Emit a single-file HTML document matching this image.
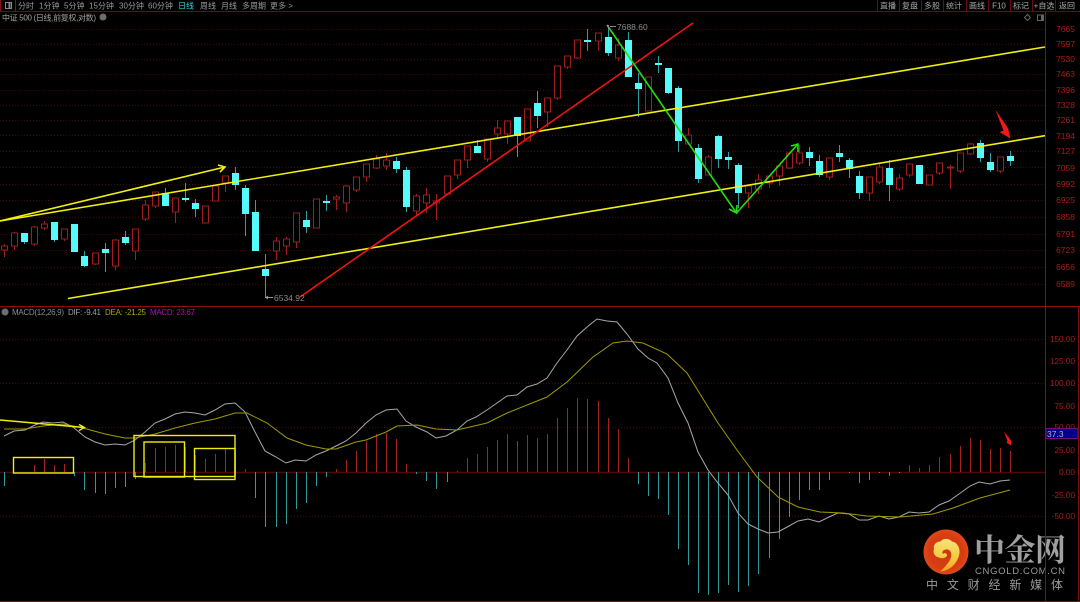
<!DOCTYPE html>
<html lang="zh"><head><meta charset="utf-8"><title>中证500 日线</title>
<style>
html,body{margin:0;padding:0;background:#000;width:1080px;height:602px;overflow:hidden}
svg{display:block;filter:blur(.3px)}
text{font-family:"Liberation Sans","Noto Sans CJK SC",sans-serif}
.tab{font-size:8px;fill:#9a9a9a}
.btn{font-size:8px;fill:#a8a8a8;text-anchor:middle}
.p{font-size:8.5px;fill:#a81c1c;text-anchor:end}
.m{font-size:8.2px;fill:#a81c1c;text-anchor:end}
</style></head><body>
<svg width="1080" height="602" viewBox="0 0 1080 602" xmlns="http://www.w3.org/2000/svg">
<defs>
<radialGradient id="lg" cx="50%" cy="50%" r="55%"><stop offset="0" stop-color="#c93a14"/><stop offset=".7" stop-color="#d93c12"/><stop offset="1" stop-color="#e0501a"/></radialGradient>
<linearGradient id="ly" x1="0" y1="0" x2="0" y2="1"><stop offset="0" stop-color="#f6e27a"/><stop offset=".6" stop-color="#f8c93c"/><stop offset="1" stop-color="#f0a020"/></linearGradient>
</defs>
<rect width="1080" height="602" fill="#000"/>

<!-- grid -->
<g stroke="#480808" stroke-width="1" stroke-dasharray="1 2" fill="none">
<path d="M0 29.500H1045M0 44.500H1045M0 59.500H1045M0 74.500H1045M0 90.500H1045M0 105.500H1045M0 120.500H1045M0 135.500H1045M0 151.500H1045M0 167.500H1045M0 184.500H1045M0 200.500H1045M0 217.500H1045M0 234.500H1045M0 250.500H1045M0 267.500H1045M0 284.500H1045"/>
<path d="M0 339.500H1045M0 383.500H1045M0 427.500H1045M0 516.500H1045"/>
</g>
<path d="M0 472.500H1045" stroke="#4e0808" stroke-width="1.500"/>

<!-- tabs -->
<text class="tab" x="18" y="8.500">分时</text>
<text class="tab" x="39" y="8.500">1分钟</text>
<text class="tab" x="64" y="8.500">5分钟</text>
<text class="tab" x="89" y="8.500">15分钟</text>
<text class="tab" x="119" y="8.500">30分钟</text>
<text class="tab" x="148" y="8.500">60分钟</text>
<text class="tab" x="178" y="8.500" style="fill:#35d0d0">日线</text>
<text class="tab" x="200" y="8.500">周线</text>
<text class="tab" x="221" y="8.500">月线</text>
<text class="tab" x="242" y="8.500">多周期</text>
<text class="tab" x="270" y="8.500">更多 &gt;</text>
<text class="btn" x="888" y="8.500">直播</text>
<text class="btn" x="910" y="8.500">复盘</text>
<text class="btn" x="932" y="8.500">多股</text>
<text class="btn" x="954" y="8.500">统计</text>
<text class="btn" x="977" y="8.500">画线</text>
<text class="btn" x="999" y="8.500">F10</text>
<text class="btn" x="1021" y="8.500">标记</text>
<text class="btn" x="1044" y="8.500">+自选</text>
<text class="btn" x="1067" y="8.500">返回</text>

<text x="2" y="20.500" font-size="8" fill="#a0a0a0" textLength="94">中证 500 (日线,前复权,对数)</text>
<circle cx="103" cy="17" r="3.500" fill="#6e6e6e"/>
<path d="M1027.500 14.500l3 3-3 3-3-3z" fill="none" stroke="#666"/>
<rect x="1037.500" y="15" width="6" height="5.500" fill="none" stroke="#666"/><rect x="1041" y="15" width="3" height="6" fill="#666"/>

<!-- price axis -->
<text class="p" x="1075" y="32">7665</text><text class="p" x="1075" y="47">7597</text><text class="p" x="1075" y="62">7530</text><text class="p" x="1075" y="77">7463</text><text class="p" x="1075" y="93">7396</text><text class="p" x="1075" y="108">7328</text><text class="p" x="1075" y="123">7261</text><text class="p" x="1075" y="139">7194</text><text class="p" x="1075" y="154">7127</text><text class="p" x="1075" y="171">7059</text><text class="p" x="1075" y="187">6992</text><text class="p" x="1075" y="203">6925</text><text class="p" x="1075" y="220">6858</text><text class="p" x="1075" y="237">6791</text><text class="p" x="1075" y="253">6723</text><text class="p" x="1075" y="270">6656</text><text class="p" x="1075" y="287">6589</text>

<!-- macd axis -->
<text class="m" x="1075" y="342">150.00</text><text class="m" x="1075" y="364">125.00</text><text class="m" x="1075" y="386">100.00</text><text class="m" x="1075" y="409">75.00</text><text class="m" x="1075" y="430">50.00</text><text class="m" x="1075" y="453">25.00</text><text class="m" x="1075" y="475">0.00</text><text class="m" x="1075" y="498">-25.00</text><text class="m" x="1075" y="519">-50.00</text>
<rect x="1046" y="428.500" width="32" height="10" fill="#00008c" stroke="#70107a" stroke-width="1"/>
<text x="1047" y="437" font-size="8.500" fill="#b0b0c0">37.3</text>

<!-- candles: red wicks -->
<path fill="none" stroke="#a01e1e" d="M4.500 244V257M14.500 232V250M34.500 226V246M44.500 221V230M64.500 229V241M95.500 253V265M115.500 239V270M135.500 229V260M145.500 200V221M155.500 192V208M175.500 198V223M225.500 176V192M276.500 237V260M286.500 237V255M296.500 213V248M336.500 195V210M346.500 185V212M356.500 177V192M366.500 164V182M376.500 155V169M386.500 153V170M416.500 194V215M426.500 188V213M436.500 194V220M457.500 160V179M467.500 146V168M487.500 139V162M497.500 120V137M507.500 121V144M547.500 98V127M557.500 66V100M567.500 56V69M577.500 40V59M598.500 33V51M618.500 38V61M688.500 128V144M708.500 155V175M748.500 186V208M758.500 174V194M769.500 176V188M779.500 166V186M789.500 153V169M799.500 145V165M829.500 158V180M869.500 177V201M879.500 163V184M899.500 174V191M909.500 164V177M939.500 163V175M950.500 165V189M960.500 153V173M970.500 143V155M1000.500 157V173"/>
<!-- candles: red bodies -->
<path fill="#000" stroke="#a01e1e" d="M1.500 246h6V250h-6zM11.500 233h6V246h-6zM31.500 227h6V244h-6zM41.500 224h6V228h-6zM61.500 229h6V239h-6zM92.500 253h6V264h-6zM112.500 240h6V266h-6zM132.500 229h6V251h-6zM142.500 205h6V219h-6zM152.500 192h6V206h-6zM172.500 198h6V212h-6zM202.500 206h6V223h-6zM212.500 186h6V201h-6zM222.500 176h6V183h-6zM273.500 241h6V251h-6zM283.500 239h6V246h-6zM293.500 213h6V242h-6zM313.500 199h6V228h-6zM333.500 197h6V199h-6zM343.500 186h6V203h-6zM353.500 177h6V190h-6zM363.500 164h6V177h-6zM373.500 159h6V168h-6zM383.500 160h6V166h-6zM413.500 196h6V211h-6zM423.500 195h6V203h-6zM433.500 201h6V203h-6zM444.500 176h6V194h-6zM454.500 160h6V175h-6zM464.500 146h6V160h-6zM484.500 139h6V159h-6zM494.500 128h6V134h-6zM504.500 121h6V134h-6zM524.500 109h6V141h-6zM544.500 98h6V112h-6zM554.500 66h6V98h-6zM564.500 56h6V67h-6zM574.500 40h6V58h-6zM595.500 33h6V41h-6zM615.500 45h6V58h-6zM645.500 77h6V111h-6zM685.500 135h6V144h-6zM705.500 157h6V175h-6zM745.500 186h6V193h-6zM755.500 180h6V189h-6zM766.500 176h6V183h-6zM776.500 166h6V176h-6zM786.500 153h6V168h-6zM796.500 153h6V163h-6zM826.500 158h6V177h-6zM866.500 177h6V193h-6zM876.500 167h6V182h-6zM896.500 178h6V189h-6zM906.500 164h6V175h-6zM926.500 175h6V185h-6zM936.500 163h6V173h-6zM947.500 167h6V168h-6zM957.500 153h6V171h-6zM967.500 144h6V154h-6zM997.500 157h6V171h-6z"/>
<!-- candles: cyan wicks -->
<path fill="none" stroke="#2f9f9f" d="M24.500 233V244M54.500 222V242M84.500 251V267M105.500 243V272M125.500 231V245M165.500 188V206M185.500 183V202M195.500 199V217M235.500 167V190M245.500 185V236M255.500 200V251M265.500 254V298M306.500 211V233M326.500 195V211M396.500 157V173M406.500 167V212M477.500 140V153M517.500 117V157M537.500 91V128M587.500 29V51M608.500 25V56M628.500 32V77M638.500 73V117M658.500 56V73M668.500 68V94M678.500 86V152M698.500 144V183M718.500 135V168M728.500 152V169M738.500 163V208M809.500 147V166M819.500 155V177M839.500 145V162M849.500 158V178M859.500 171V199M889.500 160V201M980.500 140V162M990.500 153V172M1010.500 151V166"/>
<!-- candles: cyan bodies -->
<path fill="#55fbfb" d="M21 233h7V242h-7zM51 222h7V240h-7zM71 224h7V252h-7zM81 256h7V266h-7zM102 249h7V253h-7zM122 237h7V243h-7zM162 193h7V206h-7zM182 198h7V200h-7zM192 203h7V209h-7zM232 173h7V185h-7zM242 188h7V214h-7zM252 212h7V251h-7zM262 269h7V276h-7zM303 220h7V227h-7zM323 201h7V203h-7zM393 161h7V169h-7zM403 170h7V207h-7zM474 146h7V153h-7zM514 117h7V136h-7zM534 103h7V116h-7zM584 40h7V42h-7zM605 37h7V53h-7zM625 40h7V77h-7zM635 83h7V89h-7zM655 63h7V65h-7zM665 68h7V93h-7zM675 88h7V141h-7zM695 148h7V179h-7zM715 136h7V159h-7zM725 157h7V160h-7zM735 165h7V193h-7zM806 152h7V158h-7zM816 161h7V175h-7zM836 153h7V157h-7zM846 160h7V169h-7zM856 176h7V193h-7zM886 168h7V185h-7zM916 165h7V184h-7zM977 143h7V158h-7zM987 162h7V170h-7zM1007 156h7V161h-7z"/>

<!-- drawn lines, chart -->
<g fill="none" stroke-width="1.600">
<path d="M0 221L1045 47" stroke="#f0f010"/>
<path d="M68 298.500L1045 135.700" stroke="#f0f010"/>
<path d="M0 221L225 167M218 165L225 167L220 172" stroke="#f0f010"/>
<path d="M300 297L693 23" stroke="#f01212"/>
<path d="M607 25L736.500 213L798 144" stroke="#20e010"/>
<path d="M729 209L736.500 213L737 205M791 146L798 144L798 152" stroke="#20e010"/>
</g>
<path d="M995.300 109.500L1008 128L1010.500 138.500L999.500 132L1003.500 130.500Z" fill="#f01818"/>

<!-- extreme labels -->
<text x="617" y="30" font-size="8.500" fill="#8a8a8a">7688.60</text>
<path d="M616 26.500H610M608.500 25V29" stroke="#888" fill="none"/>
<text x="274" y="301" font-size="8.500" fill="#8a8a8a">6534.92</text>
<path d="M266 297.500H273M268 296L266 297.500L268 299" stroke="#999" fill="none"/>

<!-- macd header -->
<circle cx="5" cy="312" r="3.500" fill="#6e6e6e"/>
<text x="12" y="315" font-size="8" fill="#8a8a8a" textLength="52">MACD(12,26,9)</text>
<text x="68" y="315" font-size="8" fill="#9a9a9a" textLength="33">DIF: -9.41</text>
<text x="105" y="315" font-size="8" fill="#a8a400" textLength="41">DEA: -21.25</text>
<text x="150" y="315" font-size="8" fill="#b010b0" textLength="45">MACD: 23.67</text>

<!-- macd bars -->
<path fill="none" stroke="#a52222" d="M34.500 472V465M44.500 472V459M54.500 472V465M64.500 472V464M145.500 472V463M155.500 472V448M165.500 472V447M175.500 472V445M185.500 472V447M195.500 472V455M205.500 472V459M215.500 472V454M225.500 472V449M235.500 472V452M245.500 472V469M336.500 472V469M346.500 472V460M356.500 472V451M366.500 472V441M376.500 472V434M386.500 472V433M396.500 472V439M406.500 472V464M457.500 472V471M467.500 472V458M477.500 472V454M487.500 472V447M497.500 472V440M507.500 472V434M517.500 472V441M527.500 472V435M537.500 472V438M547.500 472V434M557.500 472V418M567.500 472V408M577.500 472V398M587.500 472V399M598.500 472V401M608.500 472V418M618.500 472V429M628.500 472V458M909.500 472V465M919.500 472V468M929.500 472V465M939.500 472V457M950.500 472V454M960.500 472V446M970.500 472V438M980.500 472V440M990.500 472V449M1000.500 472V448M1010.500 472V451"/>
<path fill="none" stroke="#2f9c9c" d="M4.500 472V486M74.500 472V476M84.500 472V490M95.500 472V493M105.500 472V494M115.500 472V488M125.500 472V487M135.500 472V479M255.500 472V498M265.500 472V527M276.500 472V527M286.500 472V524M296.500 472V509M306.500 472V503M316.500 472V486M326.500 472V477M416.500 472V474M426.500 472V481M436.500 472V489M447.500 472V482M638.500 472V484M648.500 472V496M658.500 472V499M668.500 472V515M678.500 472V549M688.500 472V565M698.500 472V593M708.500 472V595M718.500 472V593M728.500 472V585M738.500 472V592M748.500 472V586M758.500 472V574M769.500 472V558M779.500 472V539M789.500 472V517M799.500 472V500M809.500 472V490M819.500 472V490M829.500 472V480M849.500 472V473M859.500 472V483M869.500 472V480M879.500 472V473M889.500 472V476M899.500 472V473"/>

<!-- DIF / DEA -->
<polyline fill="none" stroke="#a8a8a8" stroke-width="1" points="4,436 14,431 25,430 35,425 43,422 53,423 63,422 73,427 85,437 95,442 105,445 115,444 125,445 135,440 145,432 155,423 165,419 175,414 185,412 195,413 205,415 215,410 225,404 235,403 245,412 255,432 265,451 276,457 286,463 295,460 306,461 316,455 326,451 336,446 346,441 356,433 366,423 376,415 386,410 397,409 406,421 416,427 427,432 436,438 446,436 457,430 467,421 476,417 487,410 497,403 507,396 517,395 527,387 537,384 547,378 557,363 567,350 577,336 587,327 597,319 607,321 617,322 627,334 638,349 648,358 657,363 668,378 678,403 688,423 698,452 708,470 718,483 728,495 738,513 748,524 758,529 768,533 778,532 789,526 798,521 808,519 819,522 829,517 838,513 849,514 859,520 868,520 879,516 889,519 899,517 909,512 919,513 929,512 939,505 949,501 959,494 970,486 979,482 990,484 1000,481 1010,480"/>
<polyline fill="none" stroke="#a09a00" stroke-width="1" points="4,429 25,429 43,426 63,424 83,428 105,434 125,438 135,438 155,434 175,428 195,423 215,419 235,413 247,413 267,423 287,438 306,445 326,449 336,449 356,442 366,440 386,432 397,426 417,425 436,429 457,430 487,423 507,413 547,397 567,382 593,357 613,343 627,341 643,343 667,354 687,373 718,423 737,450 757,477 778,497 798,507 820,512 843,513 867,516 900,517 933,514 953,508 980,498 1010,490"/>

<!-- macd annotations -->
<g fill="none" stroke="#eded10" stroke-width="1.400">
<path d="M0 420L84 427.500M79 424.500L84.500 427.500L79 430.500"/>
<rect x="13.500" y="457.500" width="60" height="15.500"/>
<rect x="134" y="435.500" width="101" height="41"/>
<rect x="144" y="442" width="40.500" height="35"/>
<rect x="194.500" y="448.500" width="40.500" height="31"/>
</g>
<path d="M1004 431.500L1011.500 441L1011 445.500L1006.500 442.500L1007.500 441Z" fill="#f01818"/>

<!-- logo -->
<circle cx="946" cy="552" r="22.500" fill="url(#lg)"/>
<path d="M940 571.500C950 571 958 563 959.500 553C960 546 956 542 952 541.500C949 538 943 538 940.500 541.500C936 541.500 933 545 934 549C932.500 553 935 557 939 557.500C942 559 946 558 947 555.500C947 553 944 552.500 943 554C941 552 944 548.500 948 549.500C952 551 952 556 950 560C947 565 943 569 940 571.500Z" fill="url(#ly)"/>
<text x="974" y="561" font-size="31" font-weight="700" fill="#a0a0a0" textLength="92" style='font-family:"Noto Serif CJK SC","Liberation Serif",serif'>中金网</text>
<text x="975" y="574" font-size="9.500" fill="#9a9a9a" textLength="90">CNGOLD.COM.CN</text>
<text x="926" y="589" font-size="12" fill="#9a9a9a" textLength="137">中文财经新媒体</text>

<!-- frame -->
<g fill="none" stroke-width="1">
<path d="M0 11.500H1080" stroke="#6a0c14"/>
<path d="M0.500 0V11M15.500 0V11" stroke="#8a1018"/>
<path d="M877.500 0V11M899.500 0V11M921.500 0V11M943.500 0V11M966.500 0V11M988.500 0V11M1010.500 0V11M1032.500 0V11M1055.500 0V11" stroke="#6a0c14"/>
<path d="M1045.500 12V602" stroke="#801014"/>
<path d="M0 306.500H1080" stroke="#8f0c10"/>
<path d="M1078.500 307V602M0 601.500H1080" stroke="#801014"/>
<rect x="5.500" y="2.500" width="6" height="6" stroke="#888"/>
<path d="M9.500 3V8" stroke="#888" stroke-width="2"/>
</g>
</svg>
</body></html>
